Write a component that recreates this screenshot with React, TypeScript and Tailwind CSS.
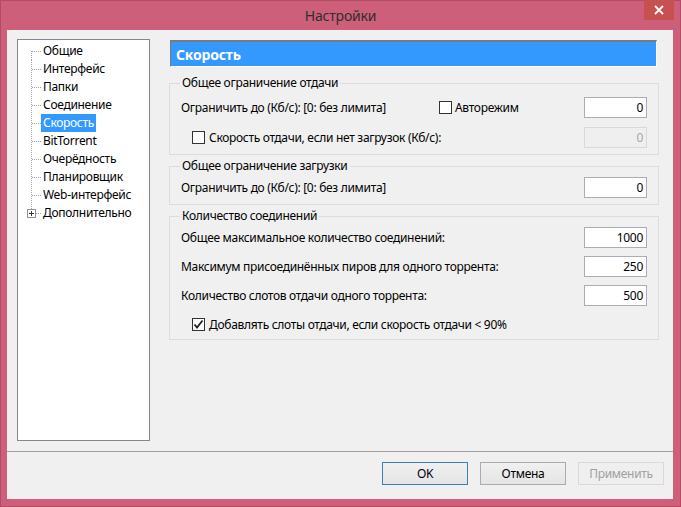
import React from "react";

const FONT = { fontFamily: '"Noto Sans", "Open Sans", sans-serif' };

function Check({ checked = false }: { checked?: boolean }) {
  return (
    <span className="w-[13px] h-[13px] border border-[#333333] bg-white flex items-center justify-center shrink-0">
      {checked && (
        <svg width="11" height="11" viewBox="0 0 11 11">
          <path d="M1.5 5.5 L4 8.5 L9.5 1.5" stroke="#222222" strokeWidth="1.8" fill="none" />
        </svg>
      )}
    </span>
  );
}

function Field({ value, disabled = false }: { value: string; disabled?: boolean }) {
  return (
    <div
      className={
        disabled
          ? "w-[63px] h-[21px] border border-[#D9D9D9] bg-[#EFEFEF] flex items-center justify-end pr-[3px] text-[#A6A6A6] shrink-0"
          : "w-[63px] h-[21px] border border-[#ABADB3] bg-white flex items-center justify-end pr-[3px] text-black shrink-0"
      }
    >
      {value}
    </div>
  );
}

function Connector({ first, last, plus }: { first?: boolean; last?: boolean; plus?: boolean }) {
  return (
    <svg width="14" height="18" viewBox="0 0 14 18" className="shrink-0">
      <line
        x1="4.5"
        y1={first ? 9 : 0}
        x2="4.5"
        y2={last ? 9 : 18}
        stroke="#A0A0A0"
        strokeDasharray="1 1"
      />
      <line x1="5" y1="9.5" x2="14" y2="9.5" stroke="#A0A0A0" strokeDasharray="1 1" />
      {plus && (
        <g>
          <rect x="0.5" y="5.5" width="8" height="8" fill="white" stroke="#919191" />
          <line x1="2" y1="9.5" x2="7" y2="9.5" stroke="#333333" />
          <line x1="4.5" y1="7" x2="4.5" y2="12" stroke="#333333" />
        </g>
      )}
    </svg>
  );
}

const items = [
  "Общие",
  "Интерфейс",
  "Папки",
  "Соединение",
  "Скорость",
  "BitTorrent",
  "Очерёдность",
  "Планировщик",
  "Web-интерфейс",
  "Дополнительно",
];

export default function App() {
  return (
    <div
      className="w-[681px] h-[507px] bg-[#CE5F7A] border border-[#B24C65] flex flex-col text-[12px] tracking-[-0.3px] text-black"
      style={FONT}
    >
      <div className="h-[29px] relative flex items-center justify-center">
        <span className="text-[14px] tracking-[-0.2px] text-[#2E2E2E] leading-none">Настройки</span>
        <div className="absolute right-[6px] top-[-1px] w-[30px] h-[20px] bg-[#C75050] flex items-center justify-center">
          <svg width="10" height="10" viewBox="0 0 10 10">
            <path d="M1 1 L9 9 M9 1 L1 9" stroke="white" strokeWidth="1.8" />
          </svg>
        </div>
      </div>
      <div className="ml-[6px] mr-[7px] mb-[7px] flex-1 bg-[#F0F0F0] flex flex-col">
        <div className="flex pl-[10px] pt-[9px]">
          <div className="w-[133px] h-[402px] border border-[#828790] bg-white pt-[2px] pl-[9px] flex flex-col">
            {items.map((it, i) => (
              <div key={it} className="h-[18px] flex items-center">
                <Connector first={i === 0} last={i === items.length - 1} plus={i === items.length - 1} />
                <span
                  className={
                    it === "Скорость"
                      ? "h-[18px] px-[2px] flex items-center bg-[#3399FF] text-white"
                      : "h-[18px] px-[2px] flex items-center"
                  }
                >
                  {it}
                </span>
              </div>
            ))}
          </div>
          <div className="ml-[19px] w-[490px] flex flex-col">
            <div className="ml-[1px] w-[487px] h-[27px] mt-[1px] bg-[#3399FF] border-t-2 border-l border-t-[#7A7A7A] border-l-[#7A7A7A] border-r border-b border-r-white border-b-white flex items-center pl-[5px]">
              <span className="text-white font-bold text-[14px] tracking-[-0.2px]">Скорость</span>
            </div>

            <fieldset className="mt-[8px] border border-[#DCDCDC] pt-[6px] pb-[6px]">
              <legend className="ml-[10px] px-[2px] leading-[16px]">Общее ограничение отдачи</legend>
              <div className="flex flex-col gap-[9px]">
                <div className="h-[21px] flex items-center pl-[11px] pr-[11px]">
                  <span className="w-[258px]">Ограничить до (Кб/с): [0: без лимита]</span>
                  <span className="flex items-center gap-[3px]">
                    <Check />
                    <span>Авторежим</span>
                  </span>
                  <span className="flex-1" />
                  <Field value="0" />
                </div>
                <div className="h-[21px] flex items-center pl-[22px] pr-[11px]">
                  <span className="flex items-center gap-[4px]">
                    <Check />
                    <span>Скорость отдачи, если нет загрузок (Кб/с):</span>
                  </span>
                  <span className="flex-1" />
                  <Field value="0" disabled />
                </div>
              </div>
            </fieldset>

            <fieldset className="mt-[3px] border border-[#DCDCDC] pt-[3px] pb-[6px]">
              <legend className="ml-[10px] px-[2px] leading-[16px]">Общее ограничение загрузки</legend>
              <div className="h-[21px] flex items-center pl-[11px] pr-[11px]">
                <span>Ограничить до (Кб/с): [0: без лимита]</span>
                <span className="flex-1" />
                <Field value="0" />
              </div>
            </fieldset>

            <fieldset className="mt-[3px] border border-[#DCDCDC] pt-[3px] pb-[4px]">
              <legend className="ml-[10px] px-[2px] leading-[16px]">Количество соединений</legend>
              <div className="flex flex-col gap-[8px]">
                <div className="h-[21px] flex items-center pl-[11px] pr-[11px]">
                  <span>Общее максимальное количество соединений:</span>
                  <span className="flex-1" />
                  <Field value="1000" />
                </div>
                <div className="h-[21px] flex items-center pl-[11px] pr-[11px]">
                  <span>Максимум присоединённых пиров для одного торрента:</span>
                  <span className="flex-1" />
                  <Field value="250" />
                </div>
                <div className="h-[21px] flex items-center pl-[11px] pr-[11px]">
                  <span>Количество слотов отдачи одного торрента:</span>
                  <span className="flex-1" />
                  <Field value="500" />
                </div>
                <div className="h-[21px] flex items-center pl-[22px] pr-[11px]">
                  <span className="flex items-center gap-[4px]">
                    <Check checked />
                    <span>Добавлять слоты отдачи, если скорость отдачи &lt; 90%</span>
                  </span>
                </div>
              </div>
            </fieldset>
          </div>
        </div>
        <div className="mt-[10px] h-px bg-[#A0A0A0]" />
        <div className="pt-[10px] pr-[9px] flex justify-end gap-[12px]">
          <div className="w-[86px] h-[23px] border border-[#3C7FB1] bg-gradient-to-b from-[#F0F0F0] to-[#E5E5E5] flex items-center justify-center">
            OK
          </div>
          <div className="w-[86px] h-[23px] border border-[#ACACAC] bg-gradient-to-b from-[#F0F0F0] to-[#E5E5E5] flex items-center justify-center">
            Отмена
          </div>
          <div className="w-[86px] h-[23px] border border-[#D9D9D9] bg-[#EFEFEF] text-[#A0A0A0] flex items-center justify-center">
            Применить
          </div>
        </div>
      </div>
    </div>
  );
}
